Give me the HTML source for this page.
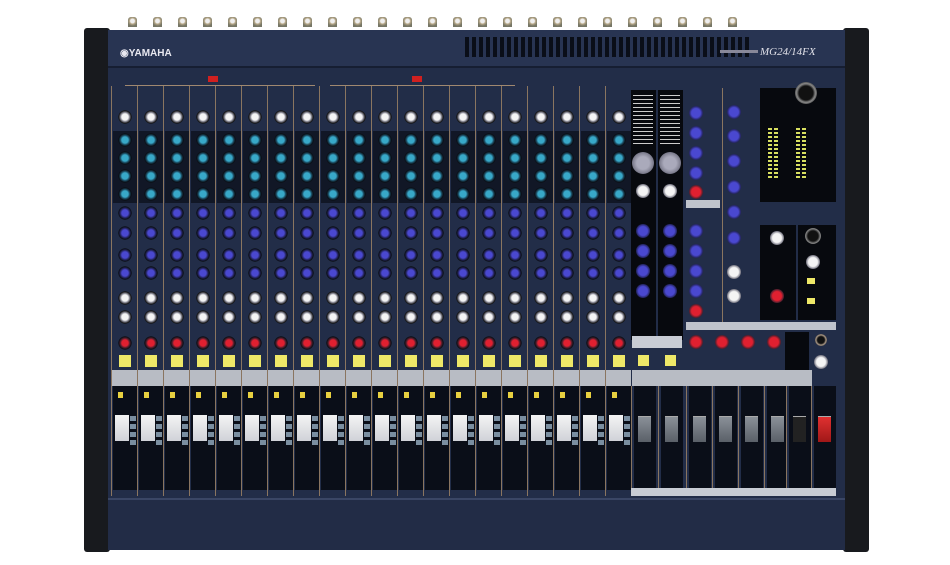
<!DOCTYPE html>
<html><head><meta charset="utf-8"><style>
*{margin:0;padding:0;box-sizing:border-box}
body{width:950px;height:565px;background:#fff;position:relative;overflow:hidden;font-family:"Liberation Sans",sans-serif}
.a{position:absolute}
.jack{position:absolute;top:17px;width:9px;height:10px;border-radius:3px 3px 0 0;background:radial-gradient(circle at 50% 40%,#eee 2px,#b8a888 3px,#776 5px)}
.ch{position:absolute;top:86px;width:26px;height:410px;border-left:1px solid #8a7560;
background:
radial-gradient(circle 7px at 13px 31px,#f4f4f4 45%,#8a8a96 65%,#111 90%,transparent 100%),
radial-gradient(circle 7px at 13px 54px,#38a8c8 45%,#1d5068 65%,#0a0e14 90%,transparent 100%),
radial-gradient(circle 7px at 13px 72px,#38a8c8 45%,#1d5068 65%,#0a0e14 90%,transparent 100%),
radial-gradient(circle 7px at 13px 90px,#38a8c8 45%,#1d5068 65%,#0a0e14 90%,transparent 100%),
radial-gradient(circle 7px at 13px 108px,#38a8c8 45%,#1d5068 65%,#0a0e14 90%,transparent 100%),
radial-gradient(circle 7px at 13px 127px,#4a48d0 45%,#2a2a70 65%,#0a0e14 90%,transparent 100%),
radial-gradient(circle 7px at 13px 147px,#4a48d0 45%,#2a2a70 65%,#0a0e14 90%,transparent 100%),
radial-gradient(circle 7px at 13px 169px,#4a48d0 45%,#2a2a70 65%,#0a0e14 90%,transparent 100%),
radial-gradient(circle 7px at 13px 187px,#4a48d0 45%,#2a2a70 65%,#0a0e14 90%,transparent 100%),
radial-gradient(circle 7px at 13px 212px,#f4f4f4 45%,#8a8a96 65%,#111 90%,transparent 100%),
radial-gradient(circle 7px at 13px 231px,#f4f4f4 45%,#8a8a96 65%,#111 90%,transparent 100%),
radial-gradient(circle 7px at 13px 257px,#e02030 45%,#602030 65%,#0a0e14 90%,transparent 100%),
linear-gradient(#eee868,#eee868) 7px 269px/12px 12px no-repeat,
linear-gradient(#b8bcc4,#b8bcc4) 0 284px/26px 16px no-repeat,
linear-gradient(#f4f4f4,#d0d2d8) 3px 329px/14px 26px no-repeat,
linear-gradient(#e8d040,#e8d040) 6px 306px/5px 6px no-repeat,
linear-gradient(#111726,#111726) 1px 45px/24px 72px no-repeat,
linear-gradient(#0a0e18,#0a0e18) 1px 300px/24px 104px no-repeat,
#222d48;background-repeat:no-repeat}
.ch:after{content:"";position:absolute;left:18px;top:330px;width:6px;height:30px;background:repeating-linear-gradient(#7a8ea0 0 5px,transparent 5px 8px)}
.dk{position:absolute;background:#07090e}
.kn{position:absolute;width:14px;height:14px;border-radius:50%}
.b{background:radial-gradient(circle,#4a48d0 45%,#2a2a70 65%,#0a0e14 90%)}
.w{background:radial-gradient(circle,#f4f4f4 45%,#8a8a96 65%,#111 90%)}
.r{background:radial-gradient(circle,#e02030 45%,#602030 65%,#0a0e14 90%)}
.y{position:absolute;width:11px;height:11px;background:#eee868}
.fd{position:absolute;top:386px;width:26px;height:110px;border-left:1px solid #8a7560;background:linear-gradient(#0a0e18,#0a0e18) 2px 0/22px 108px no-repeat,#222d48}
.cap{position:absolute;top:30px;left:6px;width:13px;height:26px;background:linear-gradient(#8a9098,#5a6068);border-top:1px solid #aaa}
.lbl{position:absolute;height:8px;background:#c0c4cc}
</style></head><body>
<div class="a" style="left:84px;top:28px;width:26px;height:524px;background:#181a1e;border-radius:3px"></div>
<div class="a" style="left:843px;top:28px;width:26px;height:524px;background:#181a1e;border-radius:3px"></div>
<div class="a" style="left:108px;top:30px;width:737px;height:520px;background:#222d48"></div>
<div class="a" style="left:108px;top:30px;width:737px;height:38px;background:#283452;border-bottom:2px solid #161e32"></div>
<div class="a" style="left:465px;top:37px;width:285px;height:20px;background:repeating-linear-gradient(90deg,#0a0e18 0 4px,#283452 4px 7px)"></div>
<div class="a" style="left:120px;top:48px;color:#e8e8f0;font-size:10px;font-weight:bold">◉YAMAHA</div>
<div class="a" style="left:760px;top:46px;color:#e0e0e8;font-size:11px;font-family:'Liberation Serif',serif;font-style:italic">MG24/14FX</div>
<div class="a" style="left:720px;top:50px;width:38px;height:3px;background:#889"></div>
<div class="a" style="left:108px;top:498px;width:737px;height:52px;background:#222c46;border-top:2px solid #3a4665"></div>
<div class="a" style="left:208px;top:76px;width:10px;height:6px;background:#d02020"></div>
<div class="a" style="left:412px;top:76px;width:10px;height:6px;background:#d02020"></div>
<div class="a" style="left:125px;top:85px;width:190px;height:1px;background:#a08870"></div>
<div class="a" style="left:330px;top:85px;width:185px;height:1px;background:#a08870"></div>
<div class="jack" style="left:128px"></div><div class="jack" style="left:153px"></div><div class="jack" style="left:178px"></div><div class="jack" style="left:203px"></div><div class="jack" style="left:228px"></div><div class="jack" style="left:253px"></div><div class="jack" style="left:278px"></div><div class="jack" style="left:303px"></div><div class="jack" style="left:328px"></div><div class="jack" style="left:353px"></div><div class="jack" style="left:378px"></div><div class="jack" style="left:403px"></div><div class="jack" style="left:428px"></div><div class="jack" style="left:453px"></div><div class="jack" style="left:478px"></div><div class="jack" style="left:503px"></div><div class="jack" style="left:528px"></div><div class="jack" style="left:553px"></div><div class="jack" style="left:578px"></div><div class="jack" style="left:603px"></div><div class="jack" style="left:628px"></div><div class="jack" style="left:653px"></div><div class="jack" style="left:678px"></div><div class="jack" style="left:703px"></div><div class="jack" style="left:728px"></div>
<div class="ch" style="left:111px"></div><div class="ch" style="left:137px"></div><div class="ch" style="left:163px"></div><div class="ch" style="left:189px"></div><div class="ch" style="left:215px"></div><div class="ch" style="left:241px"></div><div class="ch" style="left:267px"></div><div class="ch" style="left:293px"></div><div class="ch" style="left:319px"></div><div class="ch" style="left:345px"></div><div class="ch" style="left:371px"></div><div class="ch" style="left:397px"></div><div class="ch" style="left:423px"></div><div class="ch" style="left:449px"></div><div class="ch" style="left:475px"></div><div class="ch" style="left:501px"></div><div class="ch" style="left:527px"></div><div class="ch" style="left:553px"></div><div class="ch" style="left:579px"></div><div class="ch" style="left:605px"></div>
<div class="dk" style="left:631px;top:90px;width:25px;height:250px"></div>
<div class="dk" style="left:658px;top:90px;width:25px;height:250px"></div>
<div class="a" style="left:633px;top:95px;width:20px;height:50px;background:repeating-linear-gradient(#ccc 0 1px,transparent 1px 4px)"></div>
<div class="a" style="left:660px;top:95px;width:20px;height:50px;background:repeating-linear-gradient(#ccc 0 1px,transparent 1px 4px)"></div>
<div class="kn" style="left:632px;top:152px;width:22px;height:22px;background:radial-gradient(circle,#aab 40%,#556 90%)"></div>
<div class="kn" style="left:659px;top:152px;width:22px;height:22px;background:radial-gradient(circle,#aab 40%,#556 90%)"></div>
<div class="kn w" style="left:636px;top:184px"></div><div class="kn w" style="left:663px;top:184px"></div>
<div class="kn b" style="left:636px;top:224px"></div><div class="kn b" style="left:663px;top:224px"></div>
<div class="kn b" style="left:636px;top:244px"></div><div class="kn b" style="left:663px;top:244px"></div>
<div class="kn b" style="left:636px;top:264px"></div><div class="kn b" style="left:663px;top:264px"></div>
<div class="kn b" style="left:636px;top:284px"></div><div class="kn b" style="left:663px;top:284px"></div>
<div class="a" style="left:632px;top:336px;width:50px;height:12px;background:#c8ccd4"></div>
<div class="y" style="left:638px;top:355px"></div><div class="y" style="left:665px;top:355px"></div>
<div class="kn b" style="left:689px;top:106px"></div><div class="kn b" style="left:689px;top:126px"></div><div class="kn b" style="left:689px;top:146px"></div><div class="kn b" style="left:689px;top:166px"></div><div class="kn r" style="left:689px;top:185px"></div>
<div class="lbl" style="left:686px;top:200px;width:34px"></div>
<div class="kn b" style="left:689px;top:224px"></div><div class="kn b" style="left:689px;top:244px"></div><div class="kn b" style="left:689px;top:264px"></div><div class="kn b" style="left:689px;top:284px"></div><div class="kn r" style="left:689px;top:304px"></div>
<div class="a" style="left:722px;top:88px;width:1px;height:240px;background:#8a7560"></div>
<div class="kn b" style="left:727px;top:105px"></div><div class="kn b" style="left:727px;top:129px"></div><div class="kn b" style="left:727px;top:154px"></div><div class="kn b" style="left:727px;top:180px"></div><div class="kn b" style="left:727px;top:205px"></div><div class="kn b" style="left:727px;top:231px"></div><div class="kn w" style="left:727px;top:265px"></div><div class="kn w" style="left:727px;top:289px"></div>
<div class="lbl" style="left:686px;top:322px;width:150px"></div>
<div class="dk" style="left:760px;top:88px;width:76px;height:114px"></div>
<div class="kn" style="left:795px;top:82px;width:22px;height:22px;background:radial-gradient(circle,#111 45%,#888 60%,#333 80%)"></div>
<div class="a" style="left:768px;top:128px;width:56px;height:50px;background:repeating-linear-gradient(#d8e060 0 2px,transparent 2px 4px)"></div>
<div class="a" style="left:768px;top:128px;width:56px;height:50px;background:repeating-linear-gradient(90deg,transparent 0 4px,#07090e 4px 6px,transparent 6px 10px,#07090e 10px 28px)"></div>
<div class="dk" style="left:760px;top:225px;width:36px;height:95px"></div>
<div class="dk" style="left:798px;top:225px;width:38px;height:95px"></div>
<div class="kn w" style="left:770px;top:231px"></div><div class="kn r" style="left:770px;top:289px"></div>
<div class="kn" style="left:805px;top:228px;width:16px;height:16px;background:radial-gradient(circle,#111 45%,#888 65%,#222 80%)"></div>
<div class="kn w" style="left:806px;top:255px"></div>
<div class="y" style="left:807px;top:278px;width:8px;height:6px"></div><div class="y" style="left:807px;top:298px;width:8px;height:6px"></div>
<div class="kn r" style="left:689px;top:335px"></div><div class="kn r" style="left:715px;top:335px"></div><div class="kn r" style="left:741px;top:335px"></div><div class="kn r" style="left:767px;top:335px"></div>
<div class="dk" style="left:785px;top:332px;width:24px;height:40px"></div>
<div class="kn w" style="left:814px;top:355px"></div>
<div class="a" style="left:815px;top:334px;width:12px;height:12px;border-radius:50%;background:radial-gradient(circle,#111 40%,#a98 60%,#222 80%)"></div>
<div class="lbl" style="left:632px;top:370px;width:180px;height:16px;background:#b8bcc4"></div>
<div class="fd" style="left:631px"><div class="cap"></div></div>
<div class="fd" style="left:658px"><div class="cap"></div></div>
<div class="fd" style="left:686px"><div class="cap"></div></div>
<div class="fd" style="left:712px"><div class="cap"></div></div>
<div class="fd" style="left:738px"><div class="cap"></div></div>
<div class="fd" style="left:764px"><div class="cap"></div></div>
<div class="fd" style="left:786px;height:110px"><div class="cap" style="background:#222"></div></div>
<div class="fd" style="left:811px"><div class="cap" style="background:linear-gradient(#e03030,#a01818)"></div></div>
<div class="lbl" style="left:631px;top:488px;width:205px;background:#c8ccd4"></div>
</body></html>
